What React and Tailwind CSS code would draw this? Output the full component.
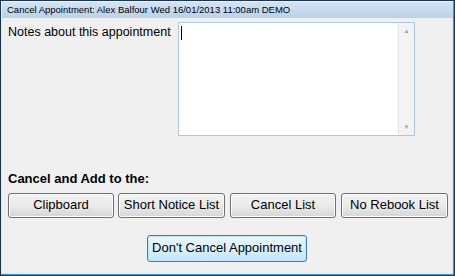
function Btn({ children, className = "" }) {
    return (
        <button
            className={
                "h-[25px] rounded-[3px] border border-[#707070] bg-gradient-to-b from-[#f2f2f2] via-[#ebebeb] to-[#d6d6d6] text-[13px] text-black shadow-[inset_0_0_0_1px_#fcfcfc] " +
                className
            }
        >
            {children}
        </button>
    );
}

export default function App() {
    return (
        <div className="w-[455px] h-[276px] bg-[#1e3550] p-px font-['Liberation_Sans',Arial,sans-serif]">
            <div className="flex h-full flex-col bg-[#2f9fd8] pr-px pb-px">
                <div className="flex h-[17px] items-center bg-gradient-to-b from-[#d4e3f3] to-[#b9d1ea] pl-[5px] text-[9.5px] text-black border-t border-l border-[#e8f0f8]">
                    Cancel Appointment: Alex Balfour Wed 16/01/2013 11:00am DEMO
                </div>
                <div className="flex flex-1 flex-col bg-[#f0f0f0] border-l border-r border-b border-[#dfe6ee] pl-[6px] pr-[4px]">
                    <div className="mt-[4px] flex">
                        <div className="mt-[1px] w-[170px] text-[12.5px] text-black">Notes about this appointment</div>
                        <div className="flex h-[114px] w-[237px] border border-[#abc7e6] bg-white">
                            <div className="ml-[2px] mt-[3px] h-[14px] w-px bg-black" />
                            <div className="flex-1" />
                            <div className="flex w-[16px] flex-col items-center justify-between bg-[#f3f3f3] border-l border-[#e6e6e6] py-[5px]">
                                <span className="text-[6px] leading-none text-[#a0a0a0]">▲</span>
                                <span className="text-[6px] leading-none text-[#a0a0a0]">▼</span>
                            </div>
                        </div>
                    </div>
                    <div className="mt-[33px] text-[13px] font-bold text-black">Cancel and Add to the:</div>
                    <div className="mt-[4px] flex gap-[4px]">
                        <Btn className="w-[107px]">Clipboard</Btn>
                        <Btn className="w-[108px]">Short Notice List</Btn>
                        <Btn className="ml-[1px] w-[107px]">Cancel List</Btn>
                        <Btn className="ml-[1px] w-[108px]">No Rebook List</Btn>
                    </div>
                    <div className="mt-[17px] flex justify-center pr-[2px]">
                        <button className="h-[27px] w-[160px] rounded-[3px] border border-[#3c7fb1] bg-gradient-to-b from-[#eaf6fd] via-[#d9f0fc] to-[#bee6fd] text-[13px] text-black shadow-[inset_0_0_0_1px_#c4e5f6]">
                            Don't Cancel Appointment
                        </button>
                    </div>
                </div>
            </div>
        </div>
    );
}
